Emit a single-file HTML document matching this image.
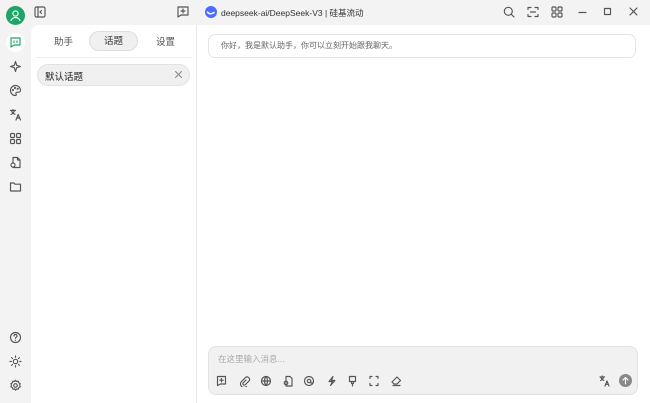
<!DOCTYPE html>
<html><head><meta charset="utf-8"><style>
*{margin:0;padding:0;box-sizing:border-box}
body{width:650px;height:403px;overflow:hidden;background:#f3f3f3;font-family:"Liberation Sans","Noto Sans CJK SC",sans-serif;position:relative;color:#333}
.abs{position:absolute}
svg{position:absolute;fill:none;stroke:#555;stroke-width:1.15;stroke-linecap:round;stroke-linejoin:round}
</style></head><body>
<div class="abs" style="left:31px;top:25px;width:166px;height:378px;background:#fff;border-right:1px solid #e8e8e8;border-top-left-radius:8px"></div>
<div class="abs" style="left:197px;top:25px;width:453px;height:378px;background:#fff"></div>
<div class="abs" style="left:6px;top:6px;width:19px;height:19px;border-radius:50%;background:#1ea563"></div>
<svg style="left:6px;top:6px" width="19" height="19" viewBox="0 0 19 19"><circle cx="9.5" cy="7.5" r="2.6" stroke="#fff"/><path d="M5 14.5c1-2.2 2.6-3 4.5-3s3.5.8 4.5 3" stroke="#fff"/></svg>
<div class="abs" style="left:6px;top:33px;width:19px;height:19px;border-radius:50%;background:#fff"></div>
<svg style="left:9px;top:36px" width="13" height="13" viewBox="0 0 13 13"><path d="M2 2h9v7H5l-3 2z" stroke="#1ea563"/><path d="M5 5v1.5M8 5v1.5" stroke="#1ea563"/></svg>
<svg style="left:9px;top:60px" width="13" height="13" viewBox="0 0 13 13"><path d="M6.5 1.5l1.2 3.8 3.8 1.2-3.8 1.2-1.2 3.8-1.2-3.8-3.8-1.2 3.8-1.2z"/></svg>
<svg style="left:9px;top:84px" width="13" height="13" viewBox="0 0 13 13"><path d="M6.5 1.5a5 5 0 1 0 0 10c1 0 1-1 .5-1.7s0-1.6 1-1.6h1.5a2 2 0 0 0 2-2c0-2.6-2.3-4.7-5-4.7z"/><circle cx="4" cy="6" r=".5"/><circle cx="6" cy="4" r=".5"/><circle cx="8.7" cy="4.8" r=".5"/></svg>
<svg style="left:9px;top:108px" width="13" height="13" viewBox="0 0 13 13"><path d="M1.5 2.5h5M4 1.5v1M2.5 2.5c.5 2 2 3.2 3.5 3.8M5.5 2.5c-.5 1.8-2 3.2-3.5 4"/><path d="M7 12l2.2-5.5L11.5 12M8 10h2.5"/></svg>
<svg style="left:9px;top:132px" width="13" height="13" viewBox="0 0 13 13"><rect x="1.5" y="1.5" width="4" height="4" rx="1"/><rect x="7.5" y="1.5" width="4" height="4" rx="1"/><rect x="1.5" y="7.5" width="4" height="4" rx="1"/><rect x="7.5" y="7.5" width="4" height="4" rx="1"/></svg>
<svg style="left:9px;top:156px" width="13" height="13" viewBox="0 0 13 13"><path d="M4 1.5h4.5l2.5 2.5v7.5H4zM8.5 1.5V4H11"/><circle cx="4" cy="9" r="2" fill="#fff"/></svg>
<svg style="left:9px;top:180px" width="13" height="13" viewBox="0 0 13 13"><path d="M1.5 3h3.5l1 1.2h5.5v6.8h-10z"/></svg>
<svg style="left:9px;top:331px" width="13" height="13" viewBox="0 0 13 13"><circle cx="6.5" cy="6.5" r="5"/><path d="M5 5a1.5 1.5 0 1 1 2 1.4c-.4.2-.5.5-.5 1M6.5 9.3v.1"/></svg>
<svg style="left:9px;top:355px" width="13" height="13" viewBox="0 0 13 13"><circle cx="6.5" cy="6.5" r="2.2"/><path d="M6.5 1v1.3M6.5 10.7V12M1 6.5h1.3M10.7 6.5H12M2.6 2.6l.9.9M9.5 9.5l.9.9M2.6 10.4l.9-.9M9.5 3.5l.9-.9"/></svg>
<svg style="left:9px;top:379px" width="13" height="13" viewBox="0 0 13 13"><circle cx="6.5" cy="6.5" r="1.8"/><path d="M6.5 1.2l1 1.3 1.7-.3.5 1.6 1.5.8-.5 1.6.6 1.6-1.5.8-.5 1.6-1.7-.3-1 1.3-1-1.3-1.7.3-.5-1.6-1.5-.8.6-1.6-.6-1.6 1.5-.8.5-1.6 1.7.3z"/></svg>
<svg style="left:34px;top:6px" width="12" height="12" viewBox="0 0 12 12"><rect x="1" y="1" width="10" height="10" rx="1.5"/><path d="M4 1v10M7.5 4.5L6 6l1.5 1.5"/></svg>
<svg style="left:177px;top:6px" width="12" height="12" viewBox="0 0 12 12"><path d="M1 1h10v8H4l-3 2zM6 3v4M4 5h4"/></svg>
<div class="abs" style="left:205px;top:6px;width:12px;height:12px;border-radius:50%;background:#4d6bfe"></div>
<svg style="left:205px;top:6px" width="12" height="12" viewBox="0 0 12 12"><path d="M2.5 6c1 2 4 2.5 6.5.5" stroke="#fff" stroke-width="1.5"/></svg>
<div class="abs" style="left:221px;top:7px;font-size:8.5px;color:#333">deepseek-ai/DeepSeek-V3 | 硅基流动</div>
<svg style="left:503px;top:6px" width="12" height="12" viewBox="0 0 12 12"><circle cx="5.3" cy="5.3" r="4"/><path d="M8.3 8.3L11 11"/></svg>
<svg style="left:527px;top:6px" width="12" height="12" viewBox="0 0 12 12"><path d="M1 3.5V1.5h3M8 1.5h3v2M11 8.5v2H8M4 10.5H1v-2M3.5 6h5"/></svg>
<svg style="left:551px;top:6px" width="12" height="12" viewBox="0 0 12 12"><rect x="1" y="1" width="4" height="4" rx="1"/><rect x="7" y="1" width="4" height="4" rx="1"/><rect x="1" y="7" width="4" height="4" rx="1"/><rect x="7" y="7" width="4" height="4" rx="1"/></svg>
<svg style="left:577px;top:6px" width="12" height="12" viewBox="0 0 12 12"><path d="M2 6.5h7"/></svg>
<svg style="left:602px;top:6px" width="12" height="12" viewBox="0 0 12 12"><rect x="2.5" y="2.5" width="6" height="6"/></svg>
<svg style="left:628px;top:6px" width="12" height="12" viewBox="0 0 12 12"><path d="M2 2l7 7M9 2L2 9"/></svg>
<div class="abs" style="left:54px;top:34px;font-size:9.5px;color:#555">助手</div>
<div class="abs" style="left:89px;top:31px;width:49px;height:20px;border-radius:10px;background:#f0f0f0;border:1px solid #ddd;font-size:9.5px;text-align:center;line-height:19px;color:#333">话题</div>
<div class="abs" style="left:156px;top:34px;font-size:9.5px;color:#555">设置</div>
<div class="abs" style="left:36px;top:57px;width:156px;height:1px;background:#eee"></div>
<div class="abs" style="left:37px;top:64px;width:153px;height:22px;border-radius:11px;background:#f0f0f0;border:1px solid #e2e2e2"></div>
<div class="abs" style="left:45px;top:69px;font-size:9.5px;color:#222">默认话题</div>
<svg style="left:174px;top:70px" width="9" height="9" viewBox="0 0 9 9"><path d="M1.5 1.5l6 6M7.5 1.5l-6 6" stroke="#888" stroke-width="1"/></svg>
<div class="abs" style="left:208px;top:34px;width:428px;height:24px;border:1px solid #e5e5e5;border-radius:7px;font-size:8px;color:#666;padding-left:12px;line-height:22px">你好，我是默认助手，你可以立刻开始跟我聊天。</div>
<div class="abs" style="left:208px;top:346px;width:430px;height:49px;border:1px solid #e2e2e2;border-radius:8px;background:#f1f1f1"></div>
<div class="abs" style="left:218px;top:353px;font-size:8.5px;color:#aaa">在这里输入消息...</div>
<svg style="left:216px;top:375px" width="190" height="12" viewBox="0 0 190 12" >
<path d="M1.5 1.5h8v7.5H4.5l-3 1.5zM5.5 3.5v3.5M3.8 5.2h3.5"/>
<path d="M30 5l-3 3a1.5 1.5 0 0 0 2 2l4-4a2.5 2.5 0 0 0-3.5-3.5l-4 4a3.5 3.5 0 0 0 5 5" />
<circle cx="50" cy="6" r="4.5"/><path d="M45.5 6h9M50 1.5c-2 2.5-2 6.5 0 9M50 1.5c2 2.5 2 6.5 0 9"/>
<path d="M70 1.5h4l2 2v7.5h-6z"/><circle cx="70" cy="8" r="1.8"/>
<circle cx="93" cy="6" r="4.5"/><circle cx="93" cy="6" r="1.7"/><path d="M94.7 6v1a1.3 1.3 0 0 0 2.6 0"/>
<path d="M117 1.5l-4 5h3.5l-2 4 4.5-5h-3.5z"/>
<path d="M133.5 1.5h6v5h-6zM135.5 6.5v2h2v-2M136.5 8.5v2.5"/>
<path d="M154 3.5v-2h2M160 1.5h2v2M162 8.5v2h-2M156 10.5h-2v-2"/>
<path d="M181 2l3.5 3.5-3.5 3.5h-3l-2-2 5-5zM177 10.5h7"/>
</svg>
<svg style="left:599px;top:375px" width="12" height="12" viewBox="0 0 12 12"><path d="M1 2h4.5M3.2 1v1M1.8 2c.4 1.8 1.6 2.8 3 3.4M4.6 2c-.4 1.6-1.6 2.8-3 3.5"/><path d="M6 11l2-5 2 5M7 9.3h2"/></svg>
<div class="abs" style="left:619px;top:374px;width:13px;height:13px;border-radius:50%;background:#888"></div>
<svg style="left:619px;top:374px" width="13" height="13" viewBox="0 0 13 13"><path d="M6.5 10V3.5M4 6l2.5-2.5L9 6" stroke="#fff"/></svg>
</body></html>
